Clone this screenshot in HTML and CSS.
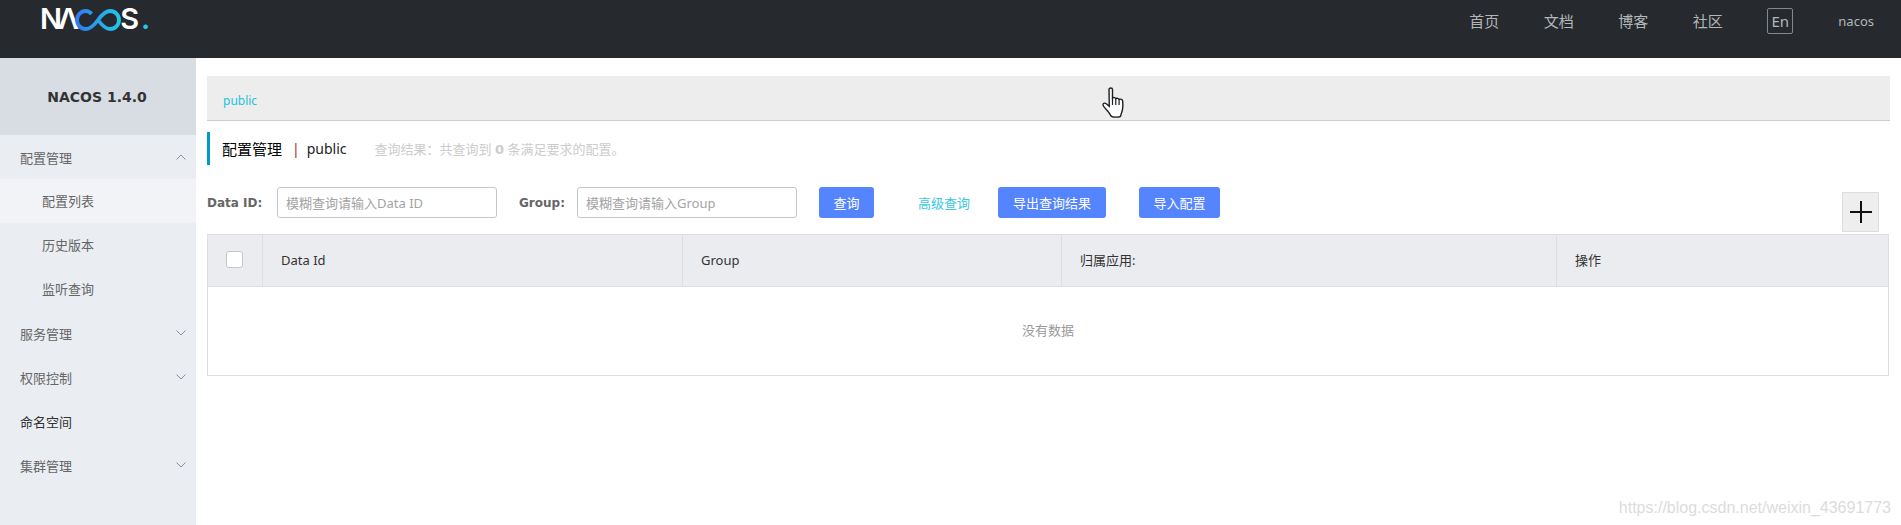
FILE: index.html
```html
<!DOCTYPE html>
<html lang="zh-CN">
<head>
  <meta charset="UTF-8">
  <title>Nacos</title>
  <link rel="stylesheet" href="styles.css">
</head>
<body>
  <header class="topBar">
    <div class="logo">
      <span class="logoHead">NΛ</span>
      <svg class="logoLoop" width="46" height="22" viewBox="0 0 46 22">
        <defs>
          <linearGradient id="loopFill" x1="0" x2="1" y1="0" y2="0">
            <stop offset="0" stop-color="#2f7cf0"/>
            <stop offset="1" stop-color="#22c8e8"/>
          </linearGradient>
        </defs>
        <path d="M16.500 5C15 3.200 13 2 10.800 2 6 2 2 6 2 11s4 9 8.800 9c4.700 0 8.200-3.500 12.200-9s7.500-9 12.200-9C40 2 44 6 44 11s-4 9-8.800 9c-4.700 0-8.200-3.500-12.200-9" fill="none" stroke="url(#loopFill)" stroke-width="3.800"/>
      </svg>
      <span>S</span><span class="logoDot">.</span>
    </div>
    <nav class="topNav">
      <a class="topLink" href="#">首页</a>
      <a class="topLink" href="#">文档</a>
      <a class="topLink" href="#">博客</a>
      <a class="topLink" href="#">社区</a>
      <span class="langBtn">En</span>
      <span class="userName">nacos</span>
    </nav>
  </header>

  <div class="mainWrap">
    <aside class="sideBar">
      <div class="sideTitle">NACOS 1.4.0</div>
      <div class="menuItem">配置管理<svg class="menuArrow" width="10" height="6" viewBox="0 0 10 6"><path d="M.5 5.500L5 1l4.500 4.500" fill="none" stroke="#8a8f99"/></svg></div>
      <div class="menuSub menuSubActive">配置列表</div>
      <div class="menuSub">历史版本</div>
      <div class="menuSub">监听查询</div>
      <div class="menuItem">服务管理<svg class="menuArrow" width="10" height="6" viewBox="0 0 10 6"><path d="M.5.500L5 5 9.500.500" fill="none" stroke="#8a8f99"/></svg></div>
      <div class="menuItem">权限控制<svg class="menuArrow" width="10" height="6" viewBox="0 0 10 6"><path d="M.5.500L5 5 9.500.500" fill="none" stroke="#8a8f99"/></svg></div>
      <div class="menuItem menuItemDark">命名空间</div>
      <div class="menuItem">集群管理<svg class="menuArrow" width="10" height="6" viewBox="0 0 10 6"><path d="M.5.500L5 5 9.500.500" fill="none" stroke="#8a8f99"/></svg></div>
    </aside>

    <main class="content">
      <div class="nsBar"><a class="nsLink" href="#">public</a></div>

      <div class="pageTitle">
        <span class="titleMain">配置管理</span>
        <span class="titleSep">|</span>
        <span class="titleNs">public</span>
        <span class="titleResult">查询结果：共查询到 <b>0</b> 条满足要求的配置。</span>
      </div>

      <form class="searchRow">
        <label class="fieldLabel labelId">Data ID:</label>
        <input class="fieldInput" type="text" placeholder="模糊查询请输入Data ID">
        <label class="fieldLabel labelGroup">Group:</label>
        <input class="fieldInput" type="text" placeholder="模糊查询请输入Group">
        <button class="btn btnQuery" type="button">查询</button>
        <a class="advLink" href="#">高级查询</a>
        <button class="btn btnExport" type="button">导出查询结果</button>
        <button class="btn btnImport" type="button">导入配置</button>
      </form>

      <div class="plusBtn">
        <svg width="22" height="22" viewBox="0 0 22 22"><path d="M0 11h22M11 0v22" stroke="#111" stroke-width="2"/></svg>
      </div>

      <div class="dataTable">
        <div class="tableHead">
          <div class="headCell cellCheck"><span class="checkBox"></span></div>
          <div class="headCell cellId">Data Id</div>
          <div class="headCell cellGroup">Group</div>
          <div class="headCell cellApp">归属应用:</div>
          <div class="headCell cellOps">操作</div>
        </div>
        <div class="tableEmpty">没有数据</div>
      </div>
    </main>
  </div>

  <!-- mouse pointer caught in the capture -->
  <svg class="handCursor" width="25" height="33" viewBox="0 0 25 33">
    <path d="M8 2.500c0-2 3.500-2 3.500 0v8.500c1.200-.8 2.800-.5 3.300.6 1.200-.7 2.800-.3 3.300.8 1.300-.6 3.400-.2 3.600 1.600.3 3 .3 6-.3 9-.5 2.500-1.300 3.500-1.800 6-.3 1.500-8.500 1.500-9.600 0-.8-2-2.500-4-4.700-6.500-1.500-2-3.800-3.500-3.300-5.300.4-1.400 2.300-1.300 3.300-.4l3 2.500z" fill="#fff" stroke="#1c2024" stroke-width="1.400"/>
    <path d="M11.500 11v7M14.800 11.600v6.400M18.100 12.400v5.600" stroke="#1c2024" stroke-width="1.200" fill="none"/>
  </svg>

  <div class="waterMark">https://blog.csdn.net/weixin_43691773</div>
</body>
</html>
```

FILE: styles.css
```css
* {
  box-sizing: border-box;
  margin: 0;
  padding: 0;
}
body {
  height: 525px;
  overflow: hidden;
  background-color: #fff;
  font-family: "Noto Sans", "Noto Sans CJK SC", sans-serif;
  font-size: 12px;
  color: #333;
}
a {
  text-decoration: none;
}

.topBar {
  height: 58px;
  background-color: #262a2f;
  display: flex;
  justify-content: space-between;
}
.logo {
  display: flex;
  align-items: flex-start;
  padding: 4px 0 0 40px;
  color: #fff;
  font-family: "Inter", sans-serif;
  font-size: 29px;
  font-weight: 600;
  line-height: 30px;
}
.logoHead {
  letter-spacing: -4px;
}
.logoLoop {
  margin: 5px -1px 0 0;
}
.logoDot {
  color: #22c8e8;
  margin-left: 2px;
}
.topNav {
  display: flex;
  align-items: flex-start;
  padding: 12px 27px 0 0;
}
.topLink {
  color: #b4b6b8;
  font-size: 15px;
  line-height: 18px;
  width: 31px;
  margin-right: 43.500px;
}
.langBtn {
  width: 26px;
  height: 26px;
  margin: -4px 0 0 0;
  border: 1px solid #85888b;
  border-radius: 2px;
  color: #b4b6b8;
  font-size: 15px;
  line-height: 24px;
  text-align: center;
}
.userName {
  color: #b4b6b8;
  font-size: 13px;
  line-height: 18px;
  margin-left: 45px;
}

.mainWrap {
  display: flex;
  height: 467px;
}
.sideBar {
  width: 196px;
  flex: none;
  background-color: #eaedf1;
}
.sideTitle {
  height: 77px;
  padding-right: 2px;
  background-color: #d8dce3;
  color: #333;
  font-family: "DejaVu Sans", sans-serif;
  font-size: 14px;
  font-weight: 700;
  line-height: 78px;
  text-align: center;
}
.menuItem {
  height: 44px;
  padding: 0 9px 0 20px;
  display: flex;
  align-items: center;
  justify-content: space-between;
  color: #666;
  font-size: 13px;
}
.menuItemDark {
  color: #333;
}
.menuSub {
  height: 44px;
  padding-left: 42px;
  color: #666;
  font-size: 13px;
  line-height: 44px;
}
.menuSubActive {
  background-color: #f2f3f7;
}
.menuArrow {
  margin-right: 1px;
}

.content {
  flex: 1;
  position: relative;
  padding: 18px 11px 0 11px;
}
.nsBar {
  height: 45px;
  background-color: #ededed;
  border-bottom: 1px solid #ccc;
  padding: 16px 0 0 16px;
  line-height: 18px;
}
.nsLink {
  color: #22c3e0;
}
.pageTitle {
  height: 33px;
  margin-top: 11px;
  padding-left: 12px;
  padding-bottom: 1px;
  border-left: 3px solid #09c;
  display: flex;
  align-items: center;
}
.titleMain {
  color: #000;
  font-size: 15px;
}
.titleSep {
  color: #a5281e;
  margin: 0 7px 0 10px;
  font-size: 14px;
}
.titleNs {
  color: #222;
  font-size: 14px;
}
.titleResult {
  color: #ccc;
  font-size: 13px;
  margin-left: 28px;
}
.titleResult b {
  font-family: "DejaVu Sans", sans-serif;
}
.searchRow {
  display: flex;
  align-items: center;
  height: 31px;
  margin-top: 22px;
}
.fieldLabel {
  font-family: "DejaVu Sans", sans-serif;
  font-size: 12px;
  font-weight: 700;
  color: #666;
}
.labelId {
  width: 70px;
}
.labelGroup {
  width: 58px;
  margin-left: 22px;
}
.fieldInput {
  height: 31px;
  width: 220px;
  border: 1px solid #c4c6cf;
  border-radius: 3px;
  padding: 0 8px;
  font-family: "Noto Sans", "Noto Sans CJK SC", sans-serif;
  font-size: 13px;
  outline: none;
}
.fieldInput::placeholder {
  color: #a3a3a3;
}
.btn {
  height: 31px;
  border: 0;
  border-radius: 3px;
  background-color: #5584ff;
  color: #fff;
  font-family: "Noto Sans CJK SC", sans-serif;
  font-size: 13px;
}
.btnQuery {
  width: 55px;
  margin-left: 22px;
}
.advLink {
  color: #3cc8e0;
  font-size: 13px;
  margin-left: 44px;
}
.btnExport {
  width: 108px;
  margin-left: 28px;
}
.btnImport {
  width: 81px;
  margin-left: 33px;
}
.plusBtn {
  position: absolute;
  left: 1646px;
  top: 134px;
  width: 37px;
  height: 40px;
  background-color: #eee;
  border: 1px solid #ddd;
  display: flex;
  align-items: center;
  justify-content: center;
}
.dataTable {
  margin-top: 16px;
  border: 1px solid #dcdee3;
  height: 142px;
  width: 1682px;
}
.tableHead {
  display: flex;
  height: 52px;
  background-color: #ebecf0;
  border-bottom: 1px solid #dcdee3;
  font-size: 13px;
}
.headCell {
  border-right: 1px solid #dcdee3;
  padding-left: 18px;
  line-height: 50px;
  color: #333;
}
.cellCheck {
  width: 55px;
  padding: 16px 0 0 18px;
}
.cellId {
  width: 420px;
}
.cellGroup {
  width: 379px;
}
.cellApp {
  width: 495px;
}
.cellOps {
  flex: 1;
  border-right: 0;
}
.checkBox {
  display: block;
  width: 17px;
  height: 17px;
  background-color: #fff;
  border: 1px solid #c4c6cf;
  border-radius: 3px;
}
.tableEmpty {
  height: 88px;
  line-height: 86px;
  text-align: center;
  font-size: 13px;
  color: #999;
}

.handCursor {
  position: absolute;
  left: 1101px;
  top: 87px;
}
.waterMark {
  position: absolute;
  right: 10px;
  bottom: 8px;
  color: #dcdcdc;
  font-family: "Liberation Sans", sans-serif;
  font-size: 16px;
}
```
